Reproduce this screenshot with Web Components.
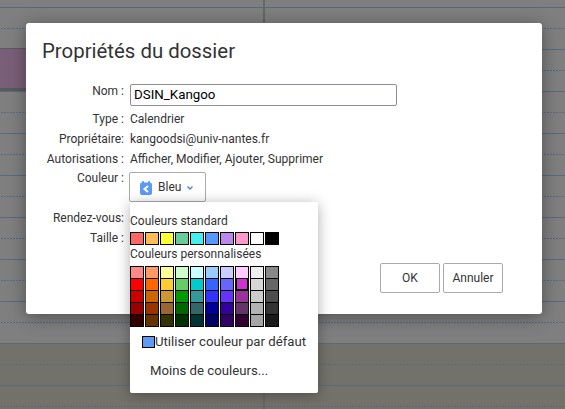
<!doctype html>
<html lang="fr"><head><meta charset="utf-8"><style>
html,body{margin:0;padding:0;width:565px;height:409px;overflow:hidden;font-family:Roboto,"Liberation Sans",sans-serif;background:#7f7f7f}
</style></head><body>
<cal-backdrop>
  <folder-dialog>
    <span slot="title">Propriétés du dossier</span>
    <prop-row label="Nom :"><text-field>DSIN_Kangoo</text-field></prop-row>
    <prop-row label="Type :">Calendrier</prop-row>
    <prop-row label="Propriétaire:">kangoodsi@univ-nantes.fr</prop-row>
    <prop-row label="Autorisations :">Afficher, Modifier, Ajouter, Supprimer</prop-row>
    <prop-row label="Couleur :" lift="1"><color-button>Bleu</color-button></prop-row>
    <prop-row label="Rendez-vous:" drop="3"></prop-row>
    <prop-row label="Taille :"></prop-row>
    <push-button slot="actions">OK</push-button>
    <push-button slot="actions">Annuler</push-button>
    <color-menu slot="overlay"></color-menu>
  </folder-dialog>
</cal-backdrop>
<script>
function def(name, html, onConnect){
  customElements.define(name, class extends HTMLElement{
    constructor(){super();this.attachShadow({mode:'open'}).innerHTML=html;}
    connectedCallback(){ if(onConnect) onConnect(this); }
  });
}
def('cal-backdrop',`<style>
:host{display:block;position:relative;width:565px;height:409px;overflow:hidden;background:linear-gradient(#7f7f7f 0,#7f7f7f 343px,#72726a 343px)}
svg{position:absolute;left:0;top:0}
.event{position:absolute;left:0;top:48px;width:40px;height:43px;box-sizing:border-box;background:#7a5f78;border-top:1px solid #5a5a5a;border-bottom:3px solid #5a5a5a}
.v{position:absolute;left:263px;top:0;width:2px;height:409px;background:#666}
.stage{position:relative;padding:23px 0 0 26px}
</style>
<svg width="565" height="409"><defs>
<pattern id="solid" width="565" height="42" patternUnits="userSpaceOnUse"><rect y="7" width="565" height="1" fill="#566a85"/></pattern>
<pattern id="dots" x="1" width="3" height="42" patternUnits="userSpaceOnUse"><rect y="28" width="2" height="1" fill="#566a85"/></pattern>
</defs>
<rect width="565" height="409" fill="url(#dots)"/>
<rect width="565" height="409" fill="url(#solid)"/>
</svg>
<div class="v"></div><div class="event"></div>
<div class="stage"><slot></slot></div>`);

def('folder-dialog',`<style>
:host{display:block;position:relative;box-sizing:border-box;width:516px;height:291px;padding:16px 39px 0 16px;background:#fff;border-radius:3px;box-shadow:0 3px 18px rgba(0,0,0,.38);color:#333;font:12px/14px Roboto,"Liberation Sans",sans-serif}
h1{margin:0;font:400 20.4px/24px Roboto,"Liberation Sans",sans-serif;color:#333}
.form{display:flex;flex-direction:column;gap:6px;margin-top:21px}
.actions{display:flex;justify-content:flex-end;gap:3px;margin-top:18px}
</style>
<h1><slot name="title"></slot></h1>
<div class="form"><slot></slot></div>
<div class="actions"><slot name="actions"></slot></div>
<slot name="overlay"></slot>`);

def('prop-row',`<style>
:host{display:grid;grid-template-columns:82px 1fr;column-gap:6px;align-items:start}
.l{text-align:right;white-space:nowrap}
.v{white-space:nowrap;min-height:14px}
</style><div class="l"></div><div class="v"><slot></slot></div>`,(el)=>{
  const l=el.shadowRoot.querySelector('.l');
  l.textContent=el.getAttribute('label');
  if(el.hasAttribute('lift')) l.style.marginTop='-1px';
  if(el.hasAttribute('drop')) el.style.paddingTop=el.getAttribute('drop')+'px';
});

def('text-field',`<style>
:host{display:block;box-sizing:border-box;width:267px;height:22px;padding-left:3px;border:1px solid #8f8b9b;border-radius:2px;background:#fff;color:#000;font:13.33px/20px Roboto,"Liberation Sans",sans-serif}
</style><slot></slot>`);

def('color-button',`<style>
:host{display:inline-flex;align-items:center;box-sizing:border-box;width:77px;height:30px;margin-left:-1px;padding-left:10px;border:1px solid #aaa;border-radius:2px;background:#fff;color:#333;font:12px/14px Roboto,"Liberation Sans",sans-serif}
svg{display:block}
.i{margin:2px 6px 0 0}
.c{margin:2px 0 0 6px}
</style>
<svg class="i" width="12" height="14" viewBox="0 0 12 14"><rect x="0" y="1.5" width="12" height="12.5" rx="2" fill="#5b9af5"/><rect x="2" y="0" width="2" height="3" rx=".8" fill="#5b9af5"/><rect x="8" y="0" width="2" height="3" rx=".8" fill="#5b9af5"/><path d="M8 5 L4.5 8 L8 11" fill="none" stroke="#fff" stroke-width="2"/></svg>
<slot></slot>
<svg class="c" width="6" height="4" viewBox="0 0 6 4"><path d="M.5 .5 L3 3 L5.5 .5" fill="none" stroke="#4a80c8" stroke-width="1.3"/></svg>`);

def('push-button',`<style>
:host{display:flex;align-items:center;justify-content:center;box-sizing:border-box;width:60px;height:30px;border:1px solid #aaa;border-radius:2px;background:#fff;color:#333;font:12px/14px Roboto,"Liberation Sans",sans-serif}
</style><slot></slot>`);

def('color-swatches',`<style>
:host{display:grid;grid-template-columns:repeat(10,14px);column-gap:1px}
i{display:block;box-sizing:border-box;width:14px;height:13px;border:1px solid #000}
:host([stack]) i{height:12px;border-bottom:0}
:host([stack]) i.last{height:13px;border-bottom:1px solid #000}
:host([stack]) i.sel{box-shadow:inset 1px 0 0 #000,inset -1px 0 0 #000,inset 0 -1px 0 #000}
</style>`,(el)=>{
  const s=el.shadowRoot;
  if(s.querySelector('i'))return;
  const cols=el.getAttribute('colors').split(' ');
  const stack=el.hasAttribute('stack');
  cols.forEach((c,n)=>{
    const i=document.createElement('i');
    i.style.background=c;
    if(stack&&n>=40)i.className='last';
    if(stack&&n===17)i.className='sel';
    s.appendChild(i);
  });
});

def('color-menu',`<style>
:host{display:block;position:absolute;left:104px;top:179px;box-sizing:border-box;width:188px;height:191px;padding-top:12px;background:#fff;border-radius:0 0 2px 2px;box-shadow:0 2px 14px rgba(0,0,0,.32);color:#333;font:12px/14px Roboto,"Liberation Sans",sans-serif}
.g1{margin-top:4px}
.t2{margin-top:2px}
.g2{margin-top:5px}
.def{display:flex;align-items:center;height:15px;margin-top:7px;padding-left:12px;font-size:13.2px;line-height:15px;white-space:nowrap}
.def b{display:block;box-sizing:border-box;width:13px;height:12px;border:1px solid #000;background:#5b9af5}
.more{margin-top:14px;padding-left:20px;font-size:13.2px;line-height:15px}
</style>
<div>Couleurs standard</div>
<color-swatches class="g1" colors="#ff6666 #ffbb55 #ffff33 #66cc99 #44eeee #5599ff #bb88ee #ff99cc #ffffff #000000"></color-swatches>
<div class="t2">Couleurs personnalisées</div>
<color-swatches class="g2" stack colors="#ff8888 #ff9966 #ffff99 #ccffcc #ccffff #99ccff #ccccff #ffccff #eeeeee #888888 #ff0000 #ff6600 #ffcc33 #66cc66 #00cccc #3366ff #6666ff #cc33cc #d6d6d6 #666666 #cc0000 #cc6600 #cc9933 #009900 #339999 #3333ff #6633ff #993399 #cccccc #4d4d4d #990000 #993300 #996633 #006600 #336666 #000099 #330099 #663366 #b3b3b3 #333333 #330000 #663300 #333300 #003300 #003333 #000066 #330066 #330033 #a6a6a6 #1a1a1a"></color-swatches>
<div class="def"><b></b><span>Utiliser couleur par défaut</span></div>
<div class="more">Moins de couleurs...</div>`);
</script>
</body></html>
